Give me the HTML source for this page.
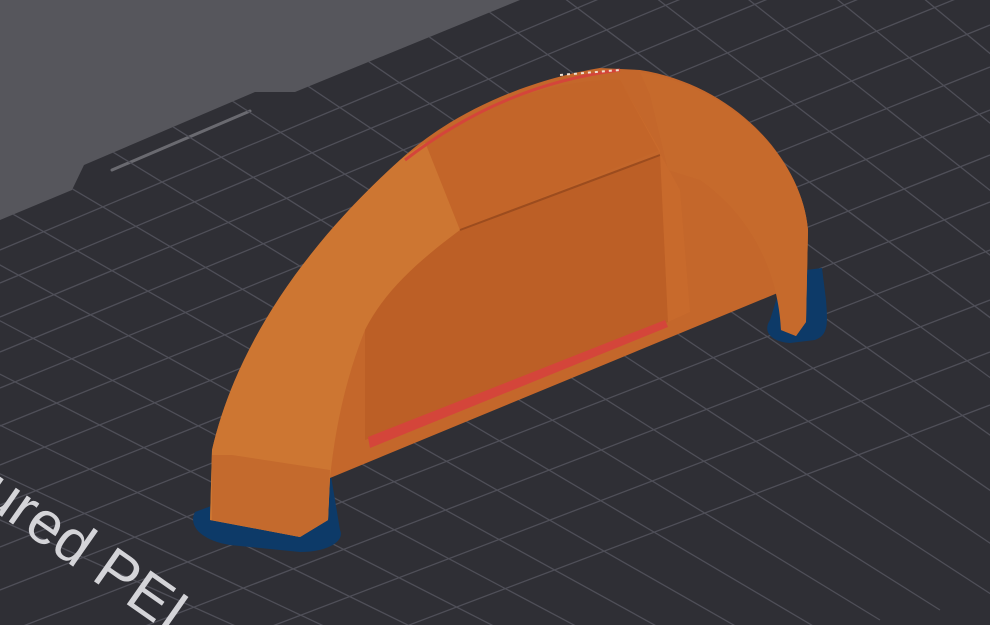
<!DOCTYPE html>
<html><head><meta charset="utf-8"><style>
html,body{margin:0;padding:0;width:990px;height:625px;overflow:hidden;background:#56565c}
svg{display:block}
</style></head><body>
<svg width="990" height="625" viewBox="0 0 990 625" xmlns="http://www.w3.org/2000/svg">
<defs>
<clipPath id="plate"><path d="M0,220 L72,190 L84,165 L255,92 L295,92 L520,0 L990,0 L990,625 L0,625 Z"/></clipPath>
</defs>
<rect width="990" height="625" fill="#56565c"/>
<path d="M0,220 L72,190 L84,165 L255,92 L295,92 L520,0 L990,0 L990,625 L0,625 Z" fill="#2f2f35"/>
<path d="M112,170 L250,111" stroke="#6a6a70" stroke-width="3" stroke-linecap="round"/>
<g clip-path="url(#plate)" stroke="#4f4f58" stroke-width="1.3" fill="none">
<path d="M0,250 L990,-165"/><path d="M0,283 L990,-130"/><path d="M0,317 L990,-93"/>
<path d="M0,352 L990,-55"/><path d="M0,388 L990,-15"/><path d="M0,426 L990,25"/>
<path d="M0,465 L990,67"/><path d="M0,505 L990,110"/><path d="M0,547 L990,155"/>
<path d="M0,590 L990,202"/><path d="M0,635 L990,250"/><path d="M0,682 L990,300"/>
<path d="M0,730 L990,352"/><path d="M0,780 L990,405"/>
<path d="M-300,100 L700,650"/><path d="M-240,70 L760,640"/><path d="M-180,40 L820,630"/>
<path d="M-120,10 L880,620"/><path d="M-60,-20 L940,610"/><path d="M0,-50 L1000,600"/>
<path d="M60,-80 L1060,590"/><path d="M120,-110 L1120,580"/><path d="M180,-140 L1180,570"/>
<path d="M240,-170 L1240,560"/><path d="M300,-200 L1300,550"/><path d="M360,-230 L1360,540"/>
<path d="M420,-260 L1420,530"/><path d="M480,-290 L1480,520"/><path d="M540,-320 L1540,510"/>
<path d="M-360,130 L640,660"/><path d="M-420,160 L580,670"/><path d="M-480,190 L520,680"/>
<path d="M-540,220 L460,690"/><path d="M-600,250 L400,700"/>
</g>
<text x="0" y="0" transform="translate(-22,500) rotate(35)" font-family="Liberation Sans, sans-serif" font-size="60" fill="#d4d4d8">ured PEI</text>
<path d="M195,512 C188,525 200,540 230,545 L300,552 C330,552 345,540 340,530 L330,470 L780,288 L770,320 C762,332 772,342 790,343 L815,340 C828,335 828,325 826,300 L822,268 L790,272 L330,462 Z" fill="#0d3a68"/>
<path d="M210,520 L300,537 L328,520 L330,478 L780,292 L781,330 L796,336 L806,322 L808,230 C802,160 735,85 640,70 L600,68 C540,78 460,105 400,160 C300,250 235,350 212,450 Z" fill="#c4672b"/>
<path d="M212,450 C235,350 300,250 400,160 C420,145 430,140 440,135 L460,230 C420,260 385,290 365,330 C345,380 335,430 330,478 L328,520 L300,537 L210,520 Z" fill="#cd7632"/>
<path d="M232,455 L330,470 L328,520 L300,537 L212,520 L212,455 Z" fill="#c46a2d"/>
<path d="M425,142 C480,105 560,78 620,80 L660,150 L460,230 Z" fill="#c36529"/>
<path d="M365,330 C385,290 420,260 460,230 L660,155 L668,322 L365,440 Z" fill="#bc5f26"/>
<path d="M460,230 L660,155" stroke="#9c4c1e" stroke-width="2"/>
<path d="M368,437 L665,320 L668,327 L370,448 Z" fill="#d4453a"/>
<path d="M620,80 L660,150 L668,322 L690,312 L680,190 Z" fill="#c86a2c"/>
<path d="M640,72 C735,88 802,160 808,230 L806,322 L796,336 L781,330 C778,270 750,215 700,180 L668,170 L650,95 Z" fill="#c66a2c"/>
<path d="M405,160 C470,110 540,80 620,70" stroke="#d4453a" stroke-width="3" fill="none"/>
<path d="M560,75 L620,70" stroke="#f0e0d0" stroke-width="2" stroke-dasharray="3 4"/>
</svg>
</body></html>
